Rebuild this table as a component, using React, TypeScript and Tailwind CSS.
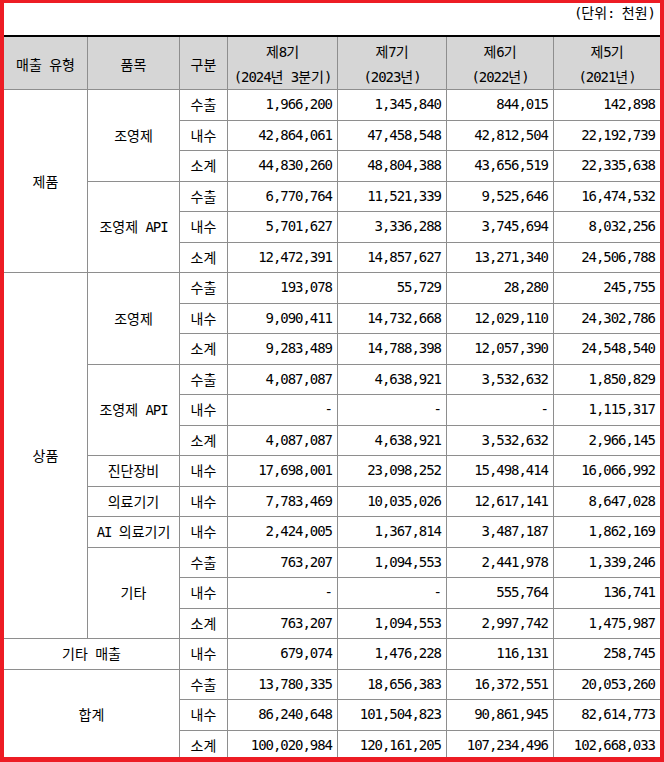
import type { ReactNode } from "react";

const M = ({ children }: { children: ReactNode }) => (
  <span className="font-['DejaVu_Sans_Mono','Noto_Sans_CJK_KR',monospace] text-[14px] tracking-[-1.05px]">
    {children}
  </span>
);

const Head = ({ children }: { children: ReactNode }) => (
  <div className="bg-[#d6d6d6] flex flex-col items-center justify-center leading-[24px] pt-[2px]">
    {children}
  </div>
);

const Label = ({ children, span = "" }: { children: ReactNode; span?: string }) => (
  <div className={`bg-white flex items-center justify-center ${span}`}>{children}</div>
);

const Kind = ({ children }: { children: ReactNode }) => (
  <div className="bg-white flex items-center justify-center">{children}</div>
);

const Num = ({ children }: { children: string }) => (
  <div className="bg-white flex items-center justify-end pr-[5px]">
    <M>{children}</M>
  </div>
);

type Row = [string, string, string, string, string];

const Rows = ({ rows }: { rows: Row[] }) => (
  <>
    {rows.map((r, i) => (
      <Line key={i} row={r} />
    ))}
  </>
);

const Line = ({ row }: { row: Row }) => (
  <>
    <Kind>{row[0]}</Kind>
    <Num>{row[1]}</Num>
    <Num>{row[2]}</Num>
    <Num>{row[3]}</Num>
    <Num>{row[4]}</Num>
  </>
);

const sp = <M> </M>;

export default function App() {
  return (
    <div className="relative w-[664px] h-[762px] overflow-hidden bg-white text-black text-[14px] font-['Noto_Sans_CJK_KR',sans-serif]">
      <div className="px-[4px]">
        <div className="h-[35px] flex justify-end items-start pt-[2px] pr-[5px] leading-[20px]">
          <span>
            <M>(</M>단위<M>: </M>천원<M>)</M>
          </span>
        </div>

        <div className="border-t-2 border-black grid gap-px bg-[#8e8e8e] grid-cols-[83px_91px_47px_109px_108px_106px_106px] grid-rows-[52px_repeat(22,29.5px)]">
          <Head>
            <span>매출{sp}유형</span>
          </Head>
          <Head>품목</Head>
          <Head>구분</Head>
          <Head>
            <span>
              제<M>8</M>기
            </span>
            <span>
              <M>(2024</M>년<M> 3</M>분기<M>)</M>
            </span>
          </Head>
          <Head>
            <span>
              제<M>7</M>기
            </span>
            <span>
              <M>(2023</M>년<M>)</M>
            </span>
          </Head>
          <Head>
            <span>
              제<M>6</M>기
            </span>
            <span>
              <M>(2022</M>년<M>)</M>
            </span>
          </Head>
          <Head>
            <span>
              제<M>5</M>기
            </span>
            <span>
              <M>(2021</M>년<M>)</M>
            </span>
          </Head>

          {/* 제품 */}
          <Label span="row-span-6">제품</Label>
          <Label span="row-span-3">조영제</Label>
          <Rows
            rows={[
              ["수출", "1,966,200", "1,345,840", "844,015", "142,898"],
              ["내수", "42,864,061", "47,458,548", "42,812,504", "22,192,739"],
              ["소계", "44,830,260", "48,804,388", "43,656,519", "22,335,638"],
            ]}
          />
          <Label span="row-span-3">
            <span>
              조영제<M> API</M>
            </span>
          </Label>
          <Rows
            rows={[
              ["수출", "6,770,764", "11,521,339", "9,525,646", "16,474,532"],
              ["내수", "5,701,627", "3,336,288", "3,745,694", "8,032,256"],
              ["소계", "12,472,391", "14,857,627", "13,271,340", "24,506,788"],
            ]}
          />

          {/* 상품 */}
          <Label span="row-span-12">상품</Label>
          <Label span="row-span-3">조영제</Label>
          <Rows
            rows={[
              ["수출", "193,078", "55,729", "28,280", "245,755"],
              ["내수", "9,090,411", "14,732,668", "12,029,110", "24,302,786"],
              ["소계", "9,283,489", "14,788,398", "12,057,390", "24,548,540"],
            ]}
          />
          <Label span="row-span-3">
            <span>
              조영제<M> API</M>
            </span>
          </Label>
          <Rows
            rows={[
              ["수출", "4,087,087", "4,638,921", "3,532,632", "1,850,829"],
              ["내수", "-", "-", "-", "1,115,317"],
              ["소계", "4,087,087", "4,638,921", "3,532,632", "2,966,145"],
            ]}
          />
          <Label>진단장비</Label>
          <Line row={["내수", "17,698,001", "23,098,252", "15,498,414", "16,066,992"]} />
          <Label>의료기기</Label>
          <Line row={["내수", "7,783,469", "10,035,026", "12,617,141", "8,647,028"]} />
          <Label>
            <span>
              <M>AI </M>의료기기
            </span>
          </Label>
          <Line row={["내수", "2,424,005", "1,367,814", "3,487,187", "1,862,169"]} />
          <Label span="row-span-3">기타</Label>
          <Rows
            rows={[
              ["수출", "763,207", "1,094,553", "2,441,978", "1,339,246"],
              ["내수", "-", "-", "555,764", "136,741"],
              ["소계", "763,207", "1,094,553", "2,997,742", "1,475,987"],
            ]}
          />

          {/* 기타 매출 */}
          <Label span="col-span-2">
            <span>기타{sp}매출</span>
          </Label>
          <Line row={["내수", "679,074", "1,476,228", "116,131", "258,745"]} />

          {/* 합계 */}
          <Label span="col-span-2 row-span-3">합계</Label>
          <Rows
            rows={[
              ["수출", "13,780,335", "18,656,383", "16,372,551", "20,053,260"],
              ["내수", "86,240,648", "101,504,823", "90,861,945", "82,614,773"],
              ["소계", "100,020,984", "120,161,205", "107,234,496", "102,668,033"],
            ]}
          />
        </div>
      </div>

      <div className="pointer-events-none absolute inset-0 border-t-[3px] border-l-4 border-r-4 border-b-[5px] border-[#ed1c24]" />
    </div>
  );
}
